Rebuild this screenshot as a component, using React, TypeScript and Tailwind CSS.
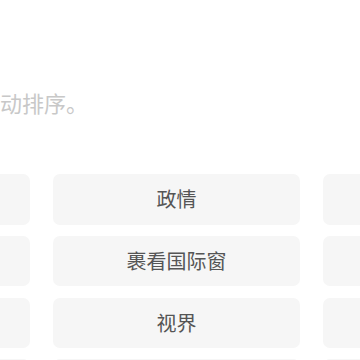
import React from 'react'

const channels = [
  '推荐', '政情', '要闻',
  '本地', '裹看国际窗', '财经',
  '科技', '视界', '体育',
  '文化', '教育', '健康',
]

export default function App() {
  return (
    <div
      className="w-[360px] h-[360px] overflow-hidden bg-white"
      style={{ fontFamily: '"Noto Sans CJK SC", "Noto Sans", sans-serif' }}
    >
      <p className="mt-[86px] ml-[-66px] whitespace-nowrap text-[22px] leading-[33px] text-[#c8c8c8]">
        长按拖动排序。
      </p>
      <div className="mt-[55px] ml-[-217px] grid w-max grid-cols-[247px_247px_247px] gap-x-[23px] gap-y-[11.3px]">
        {channels.map((name, i) => (
          <div
            key={i}
            className="flex h-[50.5px] items-center justify-center rounded-[7px] bg-[#f6f6f6] text-[20px] text-[#555555]"
          >
            {name}
          </div>
        ))}
      </div>
    </div>
  )
}
